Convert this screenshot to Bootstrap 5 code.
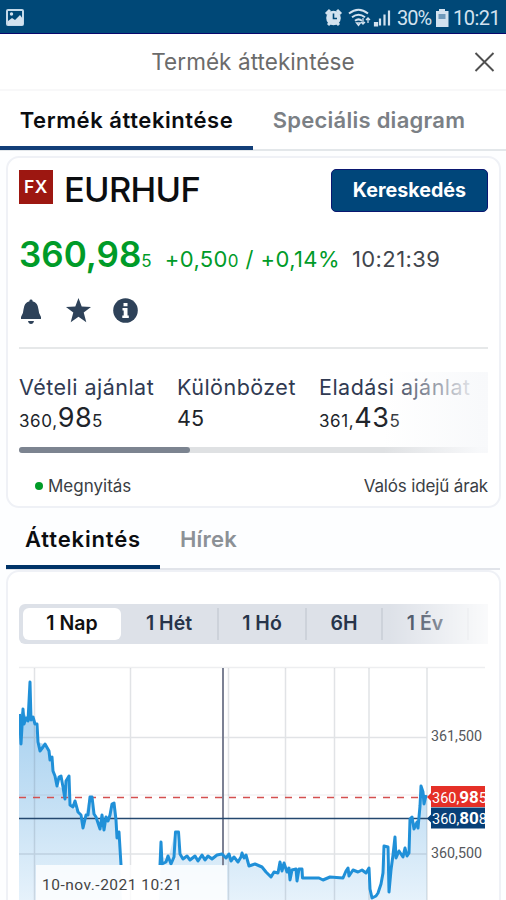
<!DOCTYPE html>
<html lang="hu">
<head>
<meta charset="utf-8">
<meta name="viewport" content="width=device-width, initial-scale=1">
<title>Termék áttekintése</title>
<link href="https://cdn.jsdelivr.net/npm/bootstrap@5.3.0/dist/css/bootstrap.min.css" rel="stylesheet">
<style>
body{font-family:Inter,"Liberation Sans",sans-serif;background:#fdfeff;width:506px;height:900px;overflow:hidden;color:#0b0d10}
.statusbar{height:34px;background:#004877;border-bottom:1px solid #08086c;color:#d3e2ef;padding:2px 7px 0 6px;font:20px/32px Roboto,sans-serif}
.t-pct{letter-spacing:-1px;width:35px;margin-left:2px}
.t-clock{letter-spacing:-.5px;width:46px;white-space:nowrap}
.batt{margin:0 1px 0 2px}
.titlebar{height:57px;background:#fff;border-bottom:2px solid #f8f8f9;color:#6b6b6b;font-size:22.5px}
.t-title{letter-spacing:.07px}
.tabs-main{height:60px;border-bottom:2px solid #e3e7ea;font-size:22px;font-weight:600;background:#fff}
.tabs-main .nav-link,.tabs-sub .nav-link{color:#7b8085;padding:0;text-align:center;white-space:nowrap}
.tabs-main .nav-link{height:59px;line-height:59px}
.tabs-main .active{width:253px;border-bottom:4px solid #123e78;color:#0b0d10}
.tabs-main .other{width:232px}
.t-m1{letter-spacing:.57px}.t-m2{letter-spacing:.25px}.t-s1{letter-spacing:.85px}.t-s2{letter-spacing:.2px}
.tabs-sub{margin:0 6px;height:62px;border-bottom:2px solid #e1e4ea;font-size:22px;font-weight:600}
.tabs-sub .nav-link{height:61px;line-height:62px;color:#8c9196}
.tabs-sub .active{width:154px;border-bottom:4px solid #003468;color:#0b0d10}
.tabs-sub .other{width:97px}
.panel{margin:0 5px 0 6px;background:#fff;border:2px solid #eff1f6;border-radius:13px;padding:0 11px}
.panel-quote{margin-top:5px;height:352px}
.panel-chart{height:360px;border-bottom:0}
.fx{width:34px;height:34px;background:#9d1711;color:#fff;font-weight:600;font-size:17.5px;letter-spacing:.6px;line-height:33px;text-align:center;margin-top:12px}
.symbol{font-size:34.5px;font-weight:500;letter-spacing:-.7px;line-height:40px;margin:12px 0 0 11px}
.trade{width:157px;height:43px;background:#00467a;border:1px solid #0a1770;border-radius:5px;color:#fff;font-weight:700;font-size:19.7px;line-height:41px;padding:0;margin-top:11px}
.trade:hover{background:#00467a;color:#fff}
.prices{height:44px;line-height:44px;margin-top:20px;white-space:nowrap}
.up{color:#009b28}
.p-big{font-size:35px;font-weight:600}
.p-mini{font-size:17px}
.p-mid{font-size:22px}
.t-chg{letter-spacing:.4px;margin-left:13px}
.t-time{letter-spacing:.4px;margin-left:12px;color:#41464d}
.icons{height:28px;margin-top:21px;color:#2e4259}
.rule{height:2px;background:#e6e8e9;margin-top:22px}
.offers{position:relative;height:102px;margin-top:1px;font-size:21.5px;color:#303a52}
.offers .cap{line-height:28px;padding-top:23px;white-space:nowrap;letter-spacing:.48px}
.offers .val{line-height:34px;color:#20242a;white-space:nowrap}
.offers .c1{width:158px}.offers .c2{width:142px}
.s17{font-size:17px;letter-spacing:.6px}.s27{font-size:27px;letter-spacing:.5px}
.track{height:6px;background:#dfe1e3;border-radius:3px;margin-top:9px}
.thumb{width:171px;height:6px;border-radius:3px;background:#7c8490}
.fade-r{position:absolute;right:0;top:22px;bottom:-1px;width:105px;background:linear-gradient(90deg,rgba(250,251,252,0),rgba(248,249,251,.97) 92%)}
.foot{font-size:17px;color:#3a3e44;height:26px;line-height:26px;margin-top:21px}
.t-f2{letter-spacing:-.15px}
.dot{width:8px;height:8px;border-radius:50%;background:#009b28;margin:0 5px 0 16px}
.seg{position:relative;height:40px;margin-top:32px;background:#dde1e8;border-radius:6px 0 0 6px;padding:4px;font-size:19.5px;font-weight:600;color:#27344a;overflow:hidden}
.seg div.it{line-height:31px;text-align:center;border-right:2px solid #cdd2da;white-space:nowrap}
.seg .w1{width:98px;background:#fff;border-radius:6px;color:#111!important;border:0!important}
.seg .w2{width:98px}.seg .w3{width:88px}.seg .w4{width:76px}.seg .w5{width:86px}
.seg .fade-r{top:0;bottom:0;width:100px;background:linear-gradient(90deg,rgba(255,255,255,0),rgba(255,255,255,.85))}
.chart{display:block;margin-top:16px}
</style>
<script src="https://cdn.jsdelivr.net/npm/bootstrap@5.3.0/dist/js/bootstrap.bundle.min.js"></script>
</head>
<body>
<header class="statusbar d-flex align-items-center justify-content-between">
  <svg width="18" height="17" viewBox="0 0 18 17"><rect x="1" y="1" width="16" height="15" rx="1" fill="none" stroke="#c4d9e9" stroke-width="2"/><path d="M2 12l4-3 3 2 5-5 3 4v6H2z" fill="#d3e2ef"/><circle cx="5.500" cy="5" r="1.700" fill="#d3e2ef"/></svg>
  <div class="d-flex align-items-center">
    <svg width="71" height="22" viewBox="324 7 71 22" fill="none" stroke="#d3e2ef"><circle cx="333.500" cy="18" r="7.300" fill="#d3e2ef" stroke="none"/><path d="M326 14l4-4M341 14l-4-4M328 25l2-2M339 25l-2-2" stroke-width="3"/><path d="M333.500 13.500v5h3.500" stroke="#004877" stroke-width="1.600"/><path d="M349 13.500q9.500-7.500 19 0M352 17.200q6.500-5 13 0M355 20.800q3.500-2.800 7 0" stroke-width="2"/><path d="M356.500 23h4l-2 2.500zM363 18v6m-2-2l2 2 2-2M368 23v-5m-2 2l2-2 2 2" stroke-width="1.300"/><path d="M375 25.500v-2.500h2v2.500zM380 25.500v-7M384.500 25.500v-11M389 25.500v-15" stroke-width="2.200"/></svg>
    <span class="t-pct">30%</span>
    <svg class="batt" width="18" height="20" viewBox="0 0 18 20"><path d="M5 1h6v2h3.500v16H2V3h3z" fill="#d3e2ef"/><path d="M4.500 6h7v5h-7z" fill="#6f9abb"/></svg>
    <span class="t-clock">10:21</span>
  </div>
</header>
<div class="titlebar d-flex align-items-center justify-content-center position-relative">
  <span class="t-title">Termék áttekintése</span>
  <svg class="position-absolute top-50 end-0 translate-middle-y me-2" width="28" height="22" viewBox="0 0 28 22"><path d="M5.500 2l18 18M23.500 2l-18 18" stroke="#505050" stroke-width="1.900"/></svg>
</div>
<nav class="nav tabs-main flex-nowrap">
  <a class="nav-link active"><span class="t-m1">Termék áttekintése</span></a>
  <a class="nav-link other"><span class="t-m2">Speciális diagram</span></a>
</nav>
<section class="panel panel-quote">
  <div class="d-flex">
    <div class="fx">FX</div>
    <div class="symbol">EURHUF</div>
    <button class="btn trade ms-auto"><span class="t-btn">Kereskedés</span></button>
  </div>
  <div class="prices d-flex align-items-baseline">
    <span class="up p-big">360,98</span><span class="up p-mini">5</span>
    <span class="up p-mid t-chg">+0,50<span class="p-mini">0</span> / +0,14%</span>
    <span class="p-mid t-time">10:21:39</span>
  </div>
  <div class="icons">
    <svg width="120" height="28" viewBox="19 297 120 28" fill="currentColor"><path d="M31 299.500a1.400 1.400 0 0 1 1.500 1.700q5.500 1.500 6 8.300.1 4.200 2.500 7.500v2H21v-2q2.400-3.300 2.500-7.500.5-6.800 6-8.300a1.400 1.400 0 0 1 1.500-1.700zM28 321h6q-.6 3-3 3t-3-3z"/><path d="M78.500 298l3.200 8.600 9.300.3-7.300 5.600 2.600 9.700-7.800-5.500-7.800 5.500 2.600-9.700-7.300-5.600 9.300-.3z"/><circle cx="125.500" cy="310.500" r="12.300"/><path d="M123.500 303h4v3.200h-4zM122.500 308h5v7.500h1.300v2.500h-6.500v-2.500h1.400v-5h-1.200z" fill="#fff"/></svg>
  </div>
  <div class="rule"></div>
  <div class="offers">
    <div class="d-flex">
      <div class="c1"><div class="cap t-o1">Vételi ajánlat</div><div class="val"><span class="s17">360,</span><span class="s27">98</span><span class="s17">5</span></div></div>
      <div class="c2"><div class="cap t-o2">Különbözet</div><div class="val t-45">45</div></div>
      <div><div class="cap t-o3">Eladási ajánlat</div><div class="val"><span class="s17">361,</span><span class="s27">43</span><span class="s17">5</span></div></div>
    </div>
    <div class="track"><div class="thumb"></div></div>
    <div class="fade-r"></div>
  </div>
  <div class="foot d-flex align-items-center"><span class="dot"></span><span class="t-f1">Megnyitás</span><span class="ms-auto t-f2">Valós idejű árak</span></div>
</section>
<nav class="nav tabs-sub flex-nowrap">
  <a class="nav-link active"><span class="t-s1">Áttekintés</span></a>
  <a class="nav-link other"><span class="t-s2">Hírek</span></a>
</nav>
<section class="panel panel-chart">
  <div class="seg d-flex">
    <div class="it w1">1 Nap</div><div class="it w2">1 Hét</div><div class="it w3">1 Hó</div><div class="it w4">6H</div><div class="it w5">1 Év</div>
    <div class="fade-r"></div>
  </div>
  <svg class="chart" width="469" height="240" viewBox="19 660 469 240">
    <defs><linearGradient id="area" x1="0" y1="680" x2="0" y2="900" gradientUnits="userSpaceOnUse"><stop offset="0" stop-color="#9fcdef"/><stop offset=".55" stop-color="#c3dff4"/><stop offset="1" stop-color="#e6f2fb"/></linearGradient></defs>
    <path fill="url(#area)" d="M19 716L23 710 28 720 34 720 38 742 46 745 53 766 57 785 64 790 69 774 70 806 77 810 83 826 89 798 94 812 100 828 107 820 114 803 119 846 122 900H19zM159 900L161 856 168 860 175 832 179 850 184 859 223 855 235 861 246 858 250 866 262 867 270 874 279 872 281 865 302 870 302 878 343 878 347 871 366 872 370 890 372 898 378 896 382 870 384 846 389 890 394 855 408 853 410 820 418 824 422 790 427 798V900z"/>
    <g stroke="#50586a" stroke-opacity=".17" stroke-width="1.500"><path d="M19 667.500H485" stroke-opacity=".1"/><path d="M19 737.500H427M19 854H427M34.500 668V900M130.500 668V900M228.500 668V900M285.500 668V900M334.500 668V900M369 668V900M427 668V900"/><path d="M19 795H427" stroke-opacity=".07"/></g>
    <path d="M223 668V866" stroke="#7c8194" stroke-width="2"/>
    <path d="M19 797.500H427" stroke="#d45050" stroke-width="1.700" stroke-dasharray="7 7"/>
    <path d="M19 818.500H431" stroke="#24486f" stroke-width="1.700"/>
    <g fill="none" stroke="#2090d8" stroke-width="3" stroke-linejoin="round">
      <path d="M19.500 714L21 744 23 709 24 724 26 718 28 721 30 682 31 720 33 717 35 724 37 724 38 742 40 751 43 747 45 744 49 751 50 760 52 757 53 771 55 776 57 786 59 777 61 776 63 787 65 799 66 781 69 776 70 805 73 807 75 801 78 812 81 815 83 828 86 815 88 815 90 797 92 797 94 814 96 817 98 823 100 829 102 815 104 830 106 817 108 821 110 815 112 804 114 803 116 820 117 838 119 832 121 865"/>
      <path d="M160 865L161 842 162 864 166 862 168 856 171 864 174 857 175.500 832 178.500 832 180 854 183 859 187 856 190 860 195 856 198 861 202 855 205 860 208 856 212 859 217 855 222 854 226 858 229 854 231 861 234 857 238 862 241 857 242 853 244 858 246 855 249 866 255 864 262 867 266 872 271 877 274 872 278 873 280 862 282 871 284 863 287 872 289 868 290 880 292 870 296 869 297 881 299 869 302 869 302.500 878 319 878 323 880 330 877 343 878 346 871 348 868 349 876 353 870 358 872 362 870 366 873 369 868 370 889 372 898 376 896 378 893 381 884 383 873 384 846 388 847 389 892 391 870 393 855 395 837 396 858 399 851 403 857 405 848 407 856 409 853 410 819 412 817 414 829 417 822 418 828 420 806 421 786 423 792 424 804 426 795"/>
    </g>
    <rect x="36" y="865" width="191" height="35" fill="#fff" fill-opacity=".78"/>
    <g font-family="Roboto,sans-serif" fill="#55585c">
      <text x="42" y="889.500" textLength="140" lengthAdjust="spacing" font-size="15.500" fill="#444">10-nov.-2021 10:21</text>
      <text x="431" y="740.500" textLength="51" lengthAdjust="spacingAndGlyphs" font-size="14">361,500</text>
      <text x="431" y="858" textLength="51" lengthAdjust="spacingAndGlyphs" font-size="14">360,500</text>
    </g>
    <path d="M427 797l4-4v-7h54v21h-54v-6z" fill="#e53027"/>
    <path d="M427 818.500l4-4v-7h54v21h-54v-6z" fill="#074078"/>
    <svg x="427" y="780" width="58" height="55" viewBox="427 780 58 55"><g fill="#fff" font-family="Roboto,sans-serif" font-size="14.500"><text x="432" y="802.500">360,<tspan font-weight="700" font-size="17">98</tspan>5</text><text x="432" y="824">360,<tspan font-weight="700" font-size="17">80</tspan>8</text></g></svg>
  </svg>
</section>
</body>
</html>
